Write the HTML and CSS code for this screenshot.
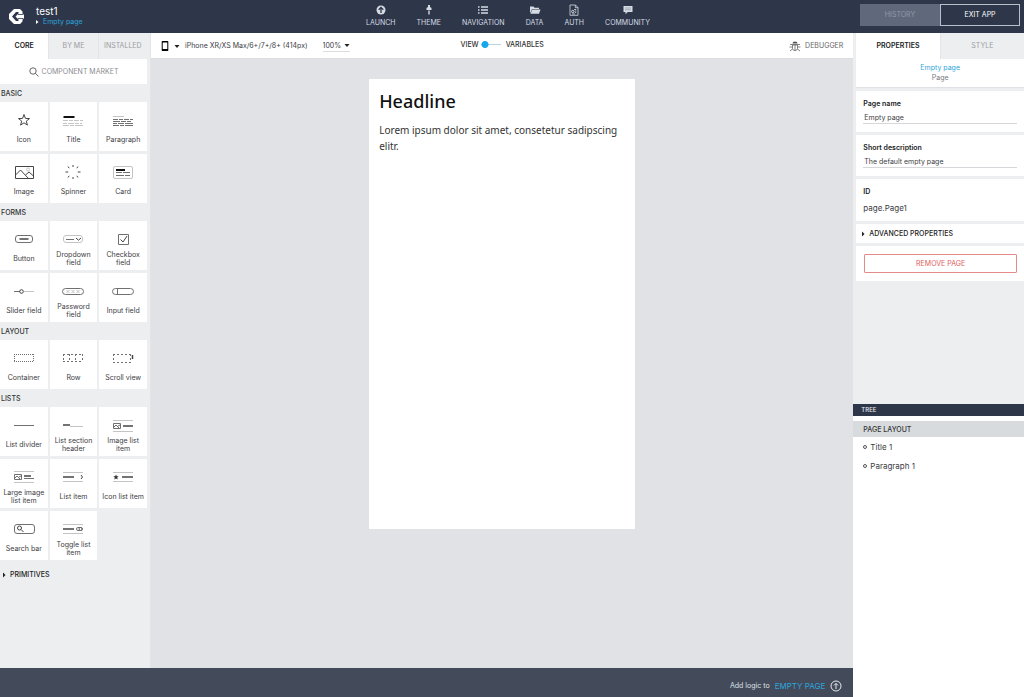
FILE: index.html
```
<!DOCTYPE html>
<html lang="en">
<head>
<meta charset="utf-8">
<meta name="viewport" content="width=device-width, initial-scale=1">
<title>test1 - Empty page</title>
<link rel="stylesheet" href="styles.css">
</head>
<body>
<div class="app">
  <header class="topbar">
    <div class="brand">
      <svg class="logo" viewBox="0 0 17 17" aria-hidden="true"><path d="M6 1h6l2.500 2.500v2L16 7v3l-1.500 1.500v2L12 16H6l-5-5V6z" fill="#fff"/><path d="M10.500 4H8L4 8.500 8 13h2.500v-1.500L7.500 8.500l3-3z" fill="#2e3749"/><path d="M10 6.500h5M10 10.500h5" stroke="#2e3749" stroke-width=".8"/></svg>
      <div>
        <div class="app-name">test1</div>
        <a class="crumb" href="#"><svg class="caret-right" viewBox="0 0 3 6" aria-hidden="true"><path d="M0 1 2.500 3 0 5z"/></svg>Empty page</a>
      </div>
    </div>
    <nav class="mainnav">
      <a href="#"><svg viewBox="0 0 12 12" aria-hidden="true"><circle cx="6" cy="6" r="4.500" fill="#d5dae3"/><path d="M6 9V3.500M3.700 5.700 6 3.400l2.300 2.300" stroke="#2e3749" stroke-width="1.300" fill="none"/></svg>LAUNCH</a>
      <a href="#"><svg viewBox="0 0 12 12" aria-hidden="true"><path d="M5 1h2v2l1.500 1v2h-5V4L5 3zM5.300 6.500h1.400V10L6 11l-.7-1z" fill="#d5dae3"/></svg>THEME</a>
      <a href="#"><svg viewBox="0 0 12 12" aria-hidden="true"><path d="M1 3h1.500M1 6h1.500M1 9h1.500M4 3h7M4 6h7M4 9h7" stroke="#d5dae3" stroke-width="1.300"/></svg>NAVIGATION</a>
      <a href="#"><svg viewBox="0 0 12 12" aria-hidden="true"><path d="M1 2.500h3.500l1 1.300H10V5H3L1.800 8.500H1z" fill="#d5dae3"/><path d="M3.300 5.500H11.500L10 9.700H1.500z" fill="#d5dae3"/></svg>DATA</a>
      <a href="#"><svg viewBox="0 0 12 12" aria-hidden="true"><path d="M2 1h5.500L10 3.500V11.300H2zM7.300 1v2.700H10" fill="none" stroke="#d5dae3" stroke-width=".8"/><circle cx="4.800" cy="7.500" r="1.200" fill="none" stroke="#d5dae3"/><path d="M6.200 5.500h2M6.800 7h1.500M7 8.500h1.200M4 10h3" stroke="#d5dae3" stroke-width=".8"/></svg>AUTH</a>
      <a href="#"><svg viewBox="0 0 12 12" aria-hidden="true"><path d="M1.500 2h9v6H5.800L3.500 10.300V8h-2z" fill="#d5dae3"/><path d="M3 4h6M3 5.800h6" stroke="#7f899b" stroke-width=".6"/></svg>COMMUNITY</a>
    </nav>
    <div class="actions">
      <button class="history" type="button" disabled>HISTORY</button>
      <button class="exit" type="button">EXIT APP</button>
    </div>
  </header>

  <div class="body">
    <div class="left">
      <div class="workspace">
        <aside class="palette">
          <div class="tabs">
            <button type="button" class="tab active">CORE</button>
            <button type="button" class="tab">BY ME</button>
            <button type="button" class="tab">INSTALLED</button>
          </div>
          <button type="button" class="market"><svg viewBox="0 0 10 10" aria-hidden="true"><circle cx="4" cy="4" r="3.200"/><path d="m6.300 6.300 3.200 3.200"/></svg>COMPONENT MARKET</button>

          <h2>BASIC</h2>
          <div class="tiles">
            <button type="button" class="tile"><svg viewBox="0 0 24 20"><path class="dark" d="m12 4.500 1.400 3.900 4.100.2-3.200 2.500 1.100 4L12 12.800l-3.400 2.300 1.100-4-3.200-2.500 4.100-.2z"/></svg><span>Icon</span></button>
            <button type="button" class="tile"><svg viewBox="0 0 24 20"><path class="bold" d="M2.500 7h11"/><path class="soft" d="M2 10.500h5m1 0h4m1 0h5m1 0h3M2 13.500h4m1 0h6m1 0h4m1 0h2M2 15.500h6m1 0h4m1 0h8"/></svg><span>Title</span></button>
            <button type="button" class="tile"><svg viewBox="0 0 24 20"><path class="soft" d="M2 6.500h11"/><path d="M2 9.500h5m1 0h4m1 0h5m1 0h3M2 11.500h7m1 0h5m1 0h4M2 13.500h4m1 0h6m1 0h8M2 15.500h6m1 0h4m1 0h8"/></svg><span>Paragraph</span></button>
            <button type="button" class="tile"><svg viewBox="0 0 24 20"><path class="dark" d="M3.500 4.500h18v12h-18zM3.500 13l5-5 8 8.500M13.500 13l3.500-3 4.500 4"/><circle class="soft" cx="16" cy="7.500" r="1.500"/></svg><span>Image</span></button>
            <button type="button" class="tile"><svg viewBox="0 0 24 20"><path class="dark" d="M12 3v2M12 15v2M4.500 10h2.700M16.800 10h2.700M7 4.500l1.200 1.700M17 4.500l-1.200 1.700M7 15.500l1.200-1.700M17 15.500l-1.200-1.700"/></svg><span>Spinner</span></button>
            <button type="button" class="tile"><svg viewBox="0 0 24 20"><rect class="soft" x="2.500" y="4.500" width="19" height="12" rx="1.500"/><path class="bold" d="M5 8h9"/><path d="M5 10.500h6m1 0h7M5 13.500h8m1 0h5"/></svg><span>Card</span></button>
          </div>

          <h2>FORMS</h2>
          <div class="tiles">
            <button type="button" class="tile"><svg viewBox="0 0 24 20"><rect x="3.500" y="6.500" width="17" height="7" rx="2.500"/><path class="medium" d="M7.500 10h9"/></svg><span>Button</span></button>
            <button type="button" class="tile"><svg viewBox="0 0 24 20"><rect class="soft" x="2.500" y="6.500" width="19" height="7" rx="2.500"/><path d="M5 10.500h8"/><path class="dark" d="m15 9 2.500 2.200L20 9"/></svg><span>Dropdown field</span></button>
            <button type="button" class="tile"><svg viewBox="0 0 24 20"><path d="M7.500 5.500h10v10h-10z"/><path class="dark" d="m9.500 10.500 2.500 2.500 4-6"/></svg><span>Checkbox field</span></button>
            <button type="button" class="tile"><svg viewBox="0 0 24 20"><path d="M2 10.500h6"/><circle class="dark" cx="9.500" cy="10.500" r="1.800"/><path class="soft" d="M12 10.500h10"/></svg><span>Slider field</span></button>
            <button type="button" class="tile"><svg viewBox="0 0 24 20"><rect x="1.500" y="7.500" width="21" height="6" rx="3"/><path class="soft" d="m5.500 9 3 3m0-3-3 3m5-3 3 3m0-3-3 3m5-3 3 3m0-3-3 3"/></svg><span>Password field</span></button>
            <button type="button" class="tile"><svg viewBox="0 0 24 20"><rect x="1.500" y="7.500" width="21" height="6" rx="3"/><path d="M6.500 8v5"/></svg><span>Input field</span></button>
          </div>

          <h2>LAYOUT</h2>
          <div class="tiles">
            <button type="button" class="tile"><svg viewBox="0 0 24 20"><path class="dots" d="M2 6.500h20M2 13.500h20M2.500 6v8M21.500 6v8"/></svg><span>Container</span></button>
            <button type="button" class="tile"><svg viewBox="0 0 24 20"><path class="dashes" d="M2 6.500h20M2 13.500h20M2.500 6v8M8.500 6v8M14.500 6v8M21.500 6v8"/></svg><span>Row</span></button>
            <button type="button" class="tile"><svg viewBox="0 0 24 20"><path class="dashes" d="M2 6.500h18M2 14.500h18M2.500 6v9M19.500 6v9"/><path class="medium" d="M21.500 7v4"/></svg><span>Scroll view</span></button>
          </div>

          <h2>LISTS</h2>
          <div class="tiles">
            <button type="button" class="tile"><svg viewBox="0 0 24 20"><path d="M2 10.500h20"/></svg><span>List divider</span></button>
            <button type="button" class="tile"><svg viewBox="0 0 24 20"><path class="medium" d="M2 10h7"/><path class="soft" d="M9 11.500h13"/></svg><span>List section header</span></button>
            <button type="button" class="tile"><svg viewBox="0 0 24 20"><path class="soft" d="M2 5.500h20M2 16.500h20"/><path d="M2.500 8.500h7v5h-7zM3 12l2-2 3 3m-1-2 2-1"/><path class="medium" d="M12 11h10"/></svg><span>Image list item</span></button>
            <button type="button" class="tile"><svg viewBox="0 0 24 20"><path class="soft" d="M2 4.500h20M2 15.500h20"/><path d="M2.500 7.500h7v5h-7zM3 11l2-2 3 3m-1-2 2-1M12 11.500h10"/><path class="medium" d="M12 9h7"/></svg><span>Large image list item</span></button>
            <button type="button" class="tile"><svg viewBox="0 0 24 20"><path class="soft" d="M2 5.500h20M2 14.500h20"/><path class="medium" d="M2 10h11"/><path class="dark" d="m20 8 1.500 2-1.500 2"/></svg><span>List item</span></button>
            <button type="button" class="tile"><svg viewBox="0 0 24 20"><path class="soft" d="M2 5.500h20M2 14.500h20"/><path class="fill" d="m5 7.500.8 1.700 1.900.1-1.500 1.200.6 2L5 11.500l-1.800 1 .6-2-1.500-1.200 1.900-.1z"/><path class="medium" d="M11 10h11"/></svg><span>Icon list item</span></button>
            <button type="button" class="tile"><svg viewBox="0 0 24 20"><rect x="2.500" y="5.500" width="20" height="9" rx="2.500"/><circle class="dark" cx="7.500" cy="9" r="2"/><path class="dark" d="m9 10.500 2.500 2.500"/></svg><span>Search bar</span></button>
            <button type="button" class="tile"><svg viewBox="0 0 24 20"><path class="soft" d="M2 5.500h20M2 14.500h20"/><path class="medium" d="M2 10h11"/><rect x="15.500" y="8.500" width="6" height="3" rx="1.500"/><circle cx="19.500" cy="10" r="1.500"/></svg><span>Toggle list item</span></button>
          </div>
          <button type="button" class="disclosure primitives"><svg class="caret-right" viewBox="0 0 3 6" aria-hidden="true"><path d="M0 .5 2.500 3 0 5.500z"/></svg>PRIMITIVES</button>
        </aside>

        <main class="stage">
          <div class="toolbar">
            <div class="device">
              <button type="button" class="device-kind" aria-label="Device type"><svg class="phone-icon" viewBox="0 0 8 12" aria-hidden="true"><path fill-rule="evenodd" d="M1.500 1h5q.8 0 .8.800v8.400q0 .8-.8.800h-5q-.8 0-.8-.8V1.800q0-.8.800-.8zM1.700 2.500v6.500h4.600V2.500z"/></svg><svg class="caret-down" viewBox="0 0 6 3" aria-hidden="true"><path d="M.5 0h5L3 3z"/></svg></button>
              <button type="button" class="device-name">iPhone XR/XS Max/6+/7+/8+ (414px)</button>
              <label class="zoom"><select aria-label="Zoom"><option>100%</option><option>75%</option></select><svg class="caret-down" viewBox="0 0 6 3" aria-hidden="true"><path d="M.5 0h5L3 3z"/></svg></label>
            </div>
            <label class="mode"><span>VIEW</span><input type="checkbox" aria-label="Show variables"><span class="mode-alt">VARIABLES</span></label>
            <div class="debug"><button type="button"><svg viewBox="0 0 12 12" aria-hidden="true"><path d="M3.500 3.500a2.500 2 0 0 1 5 0z" fill="#555"/><path d="M3.500 5h5v3.500q0 2-2.500 2t-2.500-2zM6 5v5.500M.5 7h3M11.500 7h-3M1 11l2.500-2M11 11 8.500 9M1 4.500h10" fill="none" stroke="#666" stroke-width=".8"/></svg>DEBUGGER</button></div>
          </div>
          <article class="page">
            <h1>Headline</h1>
            <p>Lorem ipsum dolor sit amet, consetetur sadipscing elitr.</p>
          </article>
        </main>
      </div>
      <footer class="logicbar"><span>Add logic to</span><a href="#">EMPTY PAGE<svg viewBox="0 0 12 12" aria-hidden="true"><circle cx="6" cy="6" r="5"/><path d="M6 9V3.500M4 5.400l2-2 2 2"/></svg></a></footer>
    </div>

    <aside class="inspector">
      <section class="props">
        <div class="tabs">
          <button type="button" class="tab active">PROPERTIES</button>
          <button type="button" class="tab">STYLE</button>
        </div>
        <div class="entity"><a href="#">Empty page</a><span>Page</span></div>
        <div class="field"><label for="page-name">Page name</label><input id="page-name" type="text" value="Empty page"></div>
        <div class="field"><label for="page-desc">Short description</label><input id="page-desc" type="text" value="The default empty page"></div>
        <div class="field"><div class="key">ID</div><div class="value">page.Page1</div></div>
        <button type="button" class="disclosure advanced"><svg class="caret-right" viewBox="0 0 3 6" aria-hidden="true"><path d="M0 .5 2.500 3 0 5.500z"/></svg>ADVANCED PROPERTIES</button>
        <div class="danger"><button type="button">REMOVE PAGE</button></div>
      </section>
      <section class="tree">
        <h2>TREE</h2>
        <h3>PAGE LAYOUT</h3>
        <ul>
          <li><a href="#">Title 1</a></li>
          <li><a href="#">Paragraph 1</a></li>
        </ul>
      </section>
    </aside>
  </div>
</div>
</body>
</html>
```

FILE: styles.css
```
*, *::before { box-sizing: border-box; }

body {
  margin: 0;
  font-family: Inter, "Liberation Sans", sans-serif;
  font-size: 7px;
  line-height: 8px;
  color: #3c3c3f;
  background: #fff;
}

a { color: inherit; text-decoration: none; }

button, input, select {
  margin: 0;
  padding: 0;
  border: 0;
  border-radius: 0;
  background: none;
  font: inherit;
  color: inherit;
}

h1, h2, h3, p, ul { margin: 0; padding: 0; font-weight: 400; }
ul { list-style: none; }
svg { display: block; flex: none; }

.app { display: flex; flex-direction: column; min-height: 100vh; }

/* Top bar */
.topbar {
  display: flex;
  align-items: center;
  height: 33px;
  padding: 0 4px 3px 8px;
  background: #2e3749;
  color: #d5dae3;
}
.brand { flex: 1; display: flex; align-items: center; gap: 11px; padding-top: 2px; }
.logo { width: 17px; height: 17px; }
.app-name { font-size: 10px; line-height: 12px; color: #fff; }
.crumb { display: flex; align-items: center; gap: 4px; line-height: 10px; color: #2ca5dc; }
.crumb .caret-right { fill: #fff; }
.caret-right { width: 3px; height: 6px; fill: #222; }
.caret-down { width: 6px; height: 3px; fill: #222; }

.mainnav { display: flex; gap: 21px; margin-right: 12px; }
.mainnav a { display: flex; flex-direction: column; align-items: center; gap: 3px; }
.mainnav svg { width: 12px; height: 12px; }

.actions { flex: 1; display: flex; justify-content: flex-end; }
.actions button { width: 80px; height: 22px; border: 1px solid #5f697b; }
.actions .history { background: #5f697b; color: #9099a8; }
.actions .exit { border-color: #b9bfca; color: #fff; }

/* Main split */
.body { flex: 1; display: grid; grid-template-columns: 5fr 1fr; }
.left { display: flex; flex-direction: column; min-width: 0; }
.workspace { flex: 1; display: flex; }

.tabs { display: flex; gap: 1px; background: #e2e4e7; }
.tab { flex: 1; height: 26px; background: #eceef0; color: #9b9da1; }
.tab.active { background: #fff; color: #222; font-weight: 600; }

/* Component palette */
.palette { width: 151px; padding-right: 3px; background: #eceef0; border-right: 1px solid #e2e4e7; }
.market {
  display: flex;
  align-items: center;
  justify-content: center;
  gap: 3px;
  width: 100%;
  height: 25px;
  background: #fff;
  color: #8b8d91;
}
.market svg { width: 10px; height: 10px; fill: none; stroke: #666; stroke-width: 1; }
.palette h2 { padding: 1px 1px 0; line-height: 17px; font-size: 7px; font-weight: 500; color: #333; }
.tiles { display: grid; grid-template-columns: repeat(3, 1fr); gap: 3px 2px; }
.tile {
  display: flex;
  flex-direction: column;
  align-items: center;
  min-height: 49px;
  padding: 8px 2px 0;
  background: #fff;
}
.tile svg { width: 24px; height: 20px; fill: none; stroke: #707070; stroke-width: 1; }
.tile span { display: flex; align-items: center; height: 20px; text-align: center; }
.tile .soft { stroke: #c4c4c4; }
.tile .dark { stroke: #444; }
.tile .medium { stroke: #444; stroke-width: 1.500; }
.tile .bold { stroke: #111; stroke-width: 2; }
.tile .dots { stroke-dasharray: 1 1; }
.tile .dashes { stroke-dasharray: 2 2; }
.tile .fill { fill: #333; stroke: none; }
.disclosure { display: flex; align-items: center; gap: 4px; font-weight: 500; color: #222; }
.primitives { padding: 11px 3px; }

/* Canvas */
.stage { flex: 1; display: flex; flex-direction: column; align-items: center; background: #e0e2e6; }
.toolbar {
  display: grid;
  grid-template-columns: 1fr auto 1fr;
  align-items: center;
  width: 100%;
  height: 26px;
  padding: 1px 10px 0;
  background: #fff;
  border-bottom: 1px solid #dcdee1;
}
.device, .device-kind, .zoom, .mode, .debug, .debug button { display: flex; align-items: center; }
.device-kind { gap: 5px; }
.phone-icon { width: 8px; height: 12px; }
.device-name { margin: 0 15px 0 5px; white-space: nowrap; }
.zoom { gap: 2px; border-bottom: 1px solid #ddd; }
.zoom select { appearance: none; line-height: 10px; }
.mode { gap: 2px; padding-bottom: 3px; font-weight: 500; color: #333; }
.mode input {
  appearance: none;
  width: 20px;
  height: 7px;
  background: radial-gradient(circle at 4px 50%, #17a7ec 3px, transparent 4px), linear-gradient(#b5d5e5, #b5d5e5) center / 100% 1px no-repeat;
}
.mode-alt { margin-left: 3px; }
.debug { justify-content: flex-end; color: #666; }
.debug button { gap: 4px; }
.debug svg { width: 12px; height: 12px; }

.page {
  width: 266px;
  min-height: 450px;
  margin: 20px 0;
  padding: 10px;
  background: #fff;
  font-family: "Noto Sans", "Open Sans", sans-serif;
}
.page h1 { font-size: 18px; line-height: 24px; font-weight: 500; color: #111; }
.page p { margin-top: 9px; font-size: 10px; line-height: 16px; color: #333; }

/* Logic bar */
.logicbar {
  display: flex;
  align-items: center;
  justify-content: flex-end;
  gap: 5px;
  height: 29px;
  padding: 7px 11px 0 0;
  background: #434a5a;
  color: #dfe2e8;
}
.logicbar a { display: flex; align-items: center; gap: 5px; font-size: 8px; color: #2ca5dc; }
.logicbar svg { width: 12px; height: 12px; fill: none; stroke: #e8eaee; stroke-width: 1; }

/* Inspector */
.inspector { display: flex; flex-direction: column; background: #eceef0; }
.props { display: flex; flex-direction: column; gap: 3px; min-height: 371px; padding-left: 3px; }
.entity {
  display: flex;
  flex-direction: column;
  align-items: center;
  gap: 2px;
  margin-top: -3px;
  padding: 5px 0;
  background: #fff;
  border-bottom: 1px solid #dfe1e4;
  color: #77797d;
}
.entity a { color: #2ca5dc; }
.field { padding: 8px 7px; background: #fff; }
.field label, .key { display: block; line-height: 10px; font-weight: 600; color: #222; }
.field input { width: 100%; height: 12px; margin-top: 3px; padding: 0 1px; border-bottom: 1px solid #d5d7da; }
.value { margin-top: 7px; padding-bottom: 1px; font-size: 8px; }
.advanced { height: 19px; padding-left: 6px; background: #fff; }
.danger { padding: 8px 7px 8px 8px; background: #fff; }
.danger button { width: 100%; height: 19px; border: 1px solid #e58a8a; border-radius: 1px; color: #e05c5c; }

/* Tree */
.tree { flex: 1; background: #fff; }
.tree h2 { padding-left: 8px; font-size: 6px; line-height: 12px; font-weight: 500; color: #e8eaee; background: #2e3749; }
.tree h3 { margin-top: 5px; padding: 1px 0 0 10px; font-size: 7px; line-height: 15px; font-weight: 500; background: #d8dbde; color: #333; }
.tree a { display: flex; align-items: center; gap: 3px; height: 19px; padding-left: 10px; font-size: 8px; }
.tree a::before { content: ""; width: 4px; height: 4px; border: 1px solid #555; border-radius: 50%; }
```
